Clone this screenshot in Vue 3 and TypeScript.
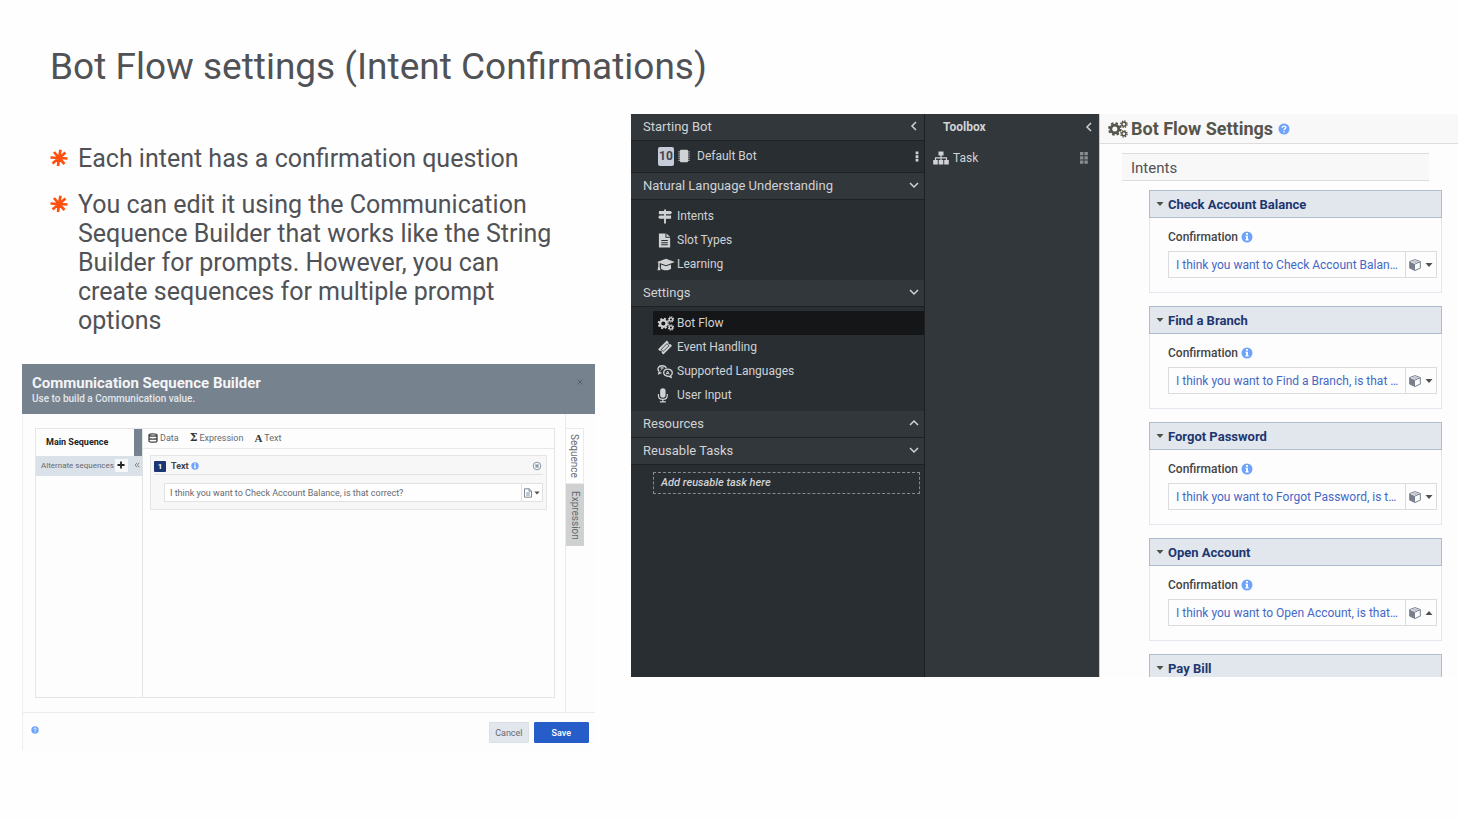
<script setup lang="ts">
import { ref } from 'vue'

interface MenuItem { icon: string; label: string; active?: boolean }
interface Intent { id: string; name: string; text: string; caret: string; open: boolean }

const nluItems: MenuItem[] = [
  { icon: 'signs', label: 'Intents' },
  { icon: 'file', label: 'Slot Types' },
  { icon: 'cap', label: 'Learning' },
]
const settingItems: MenuItem[] = [
  { icon: 'cogs', label: 'Bot Flow', active: true },
  { icon: 'ticket', label: 'Event Handling' },
  { icon: 'langs', label: 'Supported Languages' },
  { icon: 'mic', label: 'User Input' },
]
const makeIntent = (id: string, name: string, caret = 'down', open = true): Intent => ({
  id, name, caret, open, text: `I think you want to ${name}, is that correct?`,
})
const intents = ref<Intent[]>([
  makeIntent('balance', 'Check Account Balance'),
  makeIntent('branch', 'Find a Branch'),
  makeIntent('password', 'Forgot Password'),
  makeIntent('account', 'Open Account', 'up'),
  makeIntent('bill', 'Pay Bill', 'down', false),
])
const message = ref('I think you want to Check Account Balance, is that correct?')
</script>

<template>
  <svg class="sprite" aria-hidden="true">
    <symbol id="star" viewBox="0 0 18 18">
      <path d="M9 9 10.500 0.800M9 9 15.500 3.500M9 9 17.500 9.500M9 9 14.500 15M9 9 8 17M9 9 2.500 14.500M9 9 0.500 8.500M9 9 4 3" fill="none" stroke="currentColor" stroke-width="2.700" />
    </symbol>
    <symbol id="left" viewBox="0 0 10 10"><path d="M7 1 3 5 7 9" fill="none" stroke="currentColor" stroke-width="1.500" /></symbol>
    <symbol id="down" viewBox="0 0 10 10"><path d="M1 3 5 7 9 3" fill="none" stroke="currentColor" stroke-width="1.500" /></symbol>
    <symbol id="up" viewBox="0 0 10 10"><path d="M1 7 5 3 9 7" fill="none" stroke="currentColor" stroke-width="1.500" /></symbol>
    <symbol id="caret-down" viewBox="0 0 8 8"><path d="M0.500 2h7L4 6z" fill="currentColor" /></symbol>
    <symbol id="caret-up" viewBox="0 0 8 8"><path d="M0.500 6h7L4 2z" fill="currentColor" /></symbol>
    <symbol id="close" viewBox="0 0 8 8"><path d="M1.500 1.500 6.500 6.500M6.500 1.500 1.500 6.500" stroke="currentColor" fill="none" /></symbol>
    <symbol id="collapse" viewBox="0 0 8 8"><path d="M4 1 1.500 4 4 7M7 1 4.500 4 7 7" stroke="currentColor" fill="none" /></symbol>
    <symbol id="plus" viewBox="0 0 8 8"><path d="M4 0.500v7M0.500 4h7" stroke="currentColor" stroke-width="1.800" fill="none" /></symbol>
    <symbol id="chip" viewBox="0 0 14 16">
      <rect x="2.400" y="0.800" width="9.200" height="14.400" rx="1.200" fill="currentColor" />
      <path d="M0.500 3.300h13M0.500 5.700h13M0.500 8.100h13M0.500 10.500h13M0.500 12.900h13" stroke="currentColor" stroke-width="1" />
    </symbol>
    <symbol id="dots" viewBox="0 0 4 12"><path d="M.5 0.500h3v3h-3zM.5 4.500h3v3h-3zM.5 8.500h3v3h-3z" fill="currentColor" /></symbol>
    <symbol id="grip" viewBox="0 0 8 12"><path d="M0 0h3.400v3.200H0zM4.400 0h3.400v3.200H4.400zM0 4.300h3.400v3.200H0zM4.400 4.300h3.400v3.200H4.400zM0 8.600h3.400v3.200H0zM4.400 8.600h3.400v3.200H4.400z" fill="currentColor" /></symbol>
    <symbol id="signs" viewBox="0 0 16 16">
      <path d="M7 0.500h2V2h5l1.500 1.700L14 5.500H9V7h5.500v3.500H9v5H7v-5H2.200L0.700 8.800 2.200 7H7V5.500H1.500V2H7z" fill="currentColor" />
    </symbol>
    <symbol id="file" viewBox="0 0 16 16">
      <path fill-rule="evenodd" d="M1.500 0.500h7v4.500h5v10.500h-12zM4 7.500v1h7v-1zM4 9.800v1h7v-1zM4 12v1h7v-1z" fill="currentColor" />
      <path d="M9.500 0.500l4 3.600h-4z" fill="currentColor" />
    </symbol>
    <symbol id="cap" viewBox="0 0 20 16">
      <path d="M10 1.500 19.800 5.200 10 8.800 3 6.400v4l.8 4H.5l.9-4V5.700L0.200 5.200z" fill="currentColor" />
      <path d="M4.600 8 10 9.900l5.400-1.900.3 4.500c-1.400 2.600-10 2.600-11.400 0z" fill="currentColor" />
    </symbol>
    <symbol id="cogs" viewBox="0 0 20 18">
      <g fill="none" stroke="currentColor">
        <circle cx="6.800" cy="9" r="3.900" stroke-width="2.800" />
        <circle cx="6.800" cy="9" r="5.800" stroke-width="2" stroke-dasharray="2.500 2.055" />
        <circle cx="15.900" cy="4.200" r="2" stroke-width="1.500" />
        <circle cx="15.900" cy="4.200" r="3.200" stroke-width="1.300" stroke-dasharray="1.400 1.113" />
        <circle cx="15.900" cy="13.800" r="2" stroke-width="1.500" />
        <circle cx="15.900" cy="13.800" r="3.200" stroke-width="1.300" stroke-dasharray="1.400 1.113" />
      </g>
    </symbol>
    <symbol id="ticket" viewBox="0 0 16 16">
      <path fill-rule="evenodd" d="M10 .6 11.800 2.400c-.7 1.300.5 2.500 1.800 1.800L15.500 6.100 6.200 15.400 4.400 13.600c.7-1.300-.5-2.500-1.800-1.800L.6 9.900zM10.100 3.400 3.500 10l2.600 2.600L12.700 6z" fill="currentColor" />
      <path d="M10.100 4.300 4.400 10l1.700 1.700L11.800 6z" fill="currentColor" />
    </symbol>
    <symbol id="langs" viewBox="0 0 18 16">
      <g fill="none" stroke="currentColor" stroke-width="1.500">
        <path d="M2.600 8.300C-.3 5.500 1.500 1.500 5.500 1.500c2.800 0 4.600 1.400 5 3M2.600 8.300 2 10.300l3-1.100" />
        <path d="M12 5.300c5.800 0 6.300 5.700 3.300 7.200l.6 2-3-1.200c-7 .4-7-8-.9-8z" />
        <path d="M3.800 4h3.800M5.700 3v1c0 1.500-.8 2.500-1.700 3M10.300 11.300l1.700-3.800 1.700 3.800M11 10.200h2" stroke-width="1.100" />
      </g>
    </symbol>
    <symbol id="mic" viewBox="0 0 16 16">
      <rect x="2.800" y="0.300" width="5.800" height="10" rx="2.900" fill="currentColor" />
      <path d="M1 6.500v1.500c0 5.600 9.400 5.600 9.400 0V6.500M5.700 12v2.700M2.500 14.900h6.400" fill="none" stroke="currentColor" stroke-width="1.300" />
    </symbol>
    <symbol id="tree" viewBox="0 0 16 14">
      <path d="M5.500 0.500h5v4h-5zM0.200 9h4.600v4.500H.2zM5.700 9h4.600v4.500H5.700zM11.200 9h4.600v4.500h-4.600z" fill="currentColor" />
      <path d="M8 4v5M2.500 9V6.800h11V9" fill="none" stroke="currentColor" stroke-width="1.200" />
    </symbol>
    <symbol id="help" viewBox="0 0 12 12">
      <circle cx="6" cy="6" r="5.500" fill="currentColor" />
      <path d="M4.200 4.800C4.300 2.500 7.900 2.700 7.800 4.600 7.700 5.800 6 5.700 6 7.200M6 8.200v1.400" fill="none" stroke="#fff" stroke-width="1.400" />
    </symbol>
    <symbol id="info" viewBox="0 0 12 12">
      <circle cx="6" cy="6" r="5.500" fill="currentColor" />
      <path d="M5 2h2v1.700H5zM4.500 4.700H7v3.600h.7v1.200H4.400V8.300H5V5.900h-.5z" fill="#fff" />
    </symbol>
    <symbol id="cube" viewBox="0 0 12 12">
      <path d="M6 .6 11.300 2.600v6.500L6 11.500.7 9.100V2.600z" fill="#fdfdfd" stroke="currentColor" stroke-width="1" />
      <path d="M.7 2.800 6 5v6.500L.7 9.100z" fill="currentColor" />
      <path d="M6 1.200 10 2.700 6 4.300 2 2.700z" fill="#c3c8ce" />
      <path d="M6 5l5.300-2.200" fill="none" stroke="currentColor" />
    </symbol>
    <symbol id="data" viewBox="0 0 10 10">
      <path d="M1 2c0-1.600 8-1.600 8 0v6c0 1.600-8 1.600-8 0zM1 2c0 1.500 8 1.500 8 0M1 5c0 1.500 8 1.500 8 0" fill="none" stroke="currentColor" stroke-width="1.300" />
    </symbol>
    <symbol id="sheet" viewBox="0 0 10 10">
      <path d="M1.500 .8h4.700L8.500 3v6.200h-7zM6 .8V3.200h2.500M3.200 5h3.600M3.200 7h3.600" fill="none" stroke="currentColor" />
    </symbol>
    <symbol id="target" viewBox="0 0 10 10">
      <circle cx="5" cy="5" r="3.800" fill="none" stroke="currentColor" />
      <path d="M3.500 3.500 6.500 6.500M6.500 3.500 3.500 6.500" stroke="currentColor" stroke-width="1.500" />
    </symbol>
  </svg>

  <main class="slide">
    <h1>Bot Flow settings (Intent Confirmations)</h1>
    <div class="columns">
      <section class="left">
        <ul class="bullets">
          <li><svg class="star"><use href="#star" /></svg><span>Each intent has a confirmation question</span></li>
          <li><svg class="star"><use href="#star" /></svg><span>You can edit it using the Communication Sequence Builder that works like the String Builder for prompts. However, you can create sequences for multiple prompt options</span></li>
        </ul>

        <section class="dialog">
          <header class="dialog-head">
            <div>
              <h2>Communication Sequence Builder</h2>
              <p>Use to build a Communication value.</p>
            </div>
            <button class="close" aria-label="Close"><svg class="i8"><use href="#close" /></svg></button>
          </header>
          <div class="dialog-body">
            <div class="frame">
              <aside class="sequences">
                <div class="main-seq">Main Sequence</div>
                <div class="alt-seq">
                  <span>Alternate sequences</span>
                  <button class="add" aria-label="Add sequence"><svg class="i8"><use href="#plus" /></svg></button>
                  <button class="fold" aria-label="Collapse"><svg class="i6"><use href="#collapse" /></svg></button>
                </div>
              </aside>
              <div class="editor">
                <nav class="tools">
                  <button><svg class="i10"><use href="#data" /></svg>Data</button>
                  <button><b class="sigma">Σ</b>Expression</button>
                  <button><b class="serif-a">A</b>Text</button>
                </nav>
                <div class="block">
                  <div class="block-head">
                    <span class="num">1</span>
                    <label for="message">Text</label>
                    <svg class="i8 blue"><use href="#info" /></svg>
                    <button class="remove" aria-label="Remove"><svg class="i10"><use href="#target" /></svg></button>
                  </div>
                  <div class="block-field">
                    <input id="message" v-model="message" type="text">
                    <button aria-label="Value type"><svg class="i10"><use href="#sheet" /></svg><svg class="i6 dark"><use href="#caret-down" /></svg></button>
                  </div>
                </div>
              </div>
            </div>
            <nav class="tabs">
              <button class="tab on">Sequence</button>
              <button class="tab">Expression</button>
            </nav>
          </div>
          <footer class="dialog-foot">
            <button class="help" aria-label="Help"><svg class="i8 blue"><use href="#help" /></svg></button>
            <button class="btn">Cancel</button>
            <button class="btn save">Save</button>
          </footer>
        </section>
      </section>

      <section class="app">
        <aside class="sidebar">
          <button class="group">Starting Bot<svg class="i10"><use href="#left" /></svg></button>
          <div class="bot">
            <span class="count">10</span>
            <svg class="chip"><use href="#chip" /></svg>
            <span>Default Bot</span>
            <button aria-label="More"><svg class="dots"><use href="#dots" /></svg></button>
          </div>
          <button class="group">Natural Language Understanding<svg class="i10"><use href="#down" /></svg></button>
          <nav class="items">
            <a v-for="item in nluItems" :key="item.label" href="#"><svg :class="item.icon"><use :href="'#' + item.icon" /></svg><span>{{ item.label }}</span></a>
          </nav>
          <button class="group">Settings<svg class="i10"><use href="#down" /></svg></button>
          <nav class="items">
            <a v-for="item in settingItems" :key="item.label" href="#" :class="{ active: item.active }"><svg :class="item.icon"><use :href="'#' + item.icon" /></svg><span>{{ item.label }}</span></a>
          </nav>
          <button class="group">Resources<svg class="i10"><use href="#up" /></svg></button>
          <button class="group">Reusable Tasks<svg class="i10"><use href="#down" /></svg></button>
          <div class="drop">Add reusable task here</div>
        </aside>

        <aside class="toolbox">
          <button class="toolbox-head">Toolbox<svg class="i10"><use href="#left" /></svg></button>
          <div class="task"><svg class="tree"><use href="#tree" /></svg><span>Task</span><svg class="grip"><use href="#grip" /></svg></div>
        </aside>

        <div class="settings">
          <header class="settings-head">
            <svg class="cogs"><use href="#cogs" /></svg>
            <h2>Bot Flow Settings</h2>
            <svg class="i12 blue"><use href="#help" /></svg>
          </header>
          <div class="settings-body">
            <h3>Intents</h3>
            <article v-for="intent in intents" :key="intent.id" class="card">
              <button class="card-head" :aria-expanded="intent.open" @click="intent.open = !intent.open">
                <svg class="i8 dark"><use href="#caret-down" /></svg>{{ intent.name }}
              </button>
              <div v-if="intent.open" class="card-body">
                <div class="card-label"><label :for="intent.id">Confirmation</label><svg class="i12 blue"><use href="#info" /></svg></div>
                <div class="field">
                  <input :id="intent.id" v-model="intent.text" type="text">
                  <button aria-label="Value type"><svg class="i12"><use href="#cube" /></svg><svg class="i8 dark"><use :href="'#caret-' + intent.caret" /></svg></button>
                </div>
              </div>
            </article>
          </div>
        </div>
      </section>
    </div>
  </main>
</template>

<style>
body { margin: 0; background: #fefefe; }
</style>

<style scoped>
* { box-sizing: border-box; }
h1, h2, h3, p, ul { margin: 0; padding: 0; font-weight: 400; }
button { font: inherit; color: inherit; background: none; border: 0; padding: 0; cursor: pointer; }
input { font: inherit; color: inherit; background: none; border: 0; min-width: 0; outline: 0; text-overflow: ellipsis; }
a { color: inherit; text-decoration: none; }
svg { flex: none; display: block; }
.sprite { position: absolute; width: 0; height: 0; }
.i6 { width: 6px; height: 6px; }
.i8 { width: 8px; height: 8px; }
.i10 { width: 10px; height: 10px; }
.i12 { width: 12px; height: 12px; }
.blue { color: #6ea3fb; }
.dark { color: #505048; }

.slide { height: 100vh; display: flex; flex-direction: column; padding: 45px 0 69px 22px; font-family: Roboto, "Liberation Sans", sans-serif; color: #505256; }
h1 { font-size: 37px; line-height: 44px; padding-left: 28px; margin-bottom: 25px; }
.columns { flex: 1; min-height: 0; display: grid; grid-template-columns: minmax(0, 573fr) minmax(0, 827fr); gap: 36px; }
.left { display: flex; flex-direction: column; }
.bullets { list-style: none; padding: 30px 40px 29px 28px; font-size: 25px; line-height: 29px; display: flex; flex-direction: column; gap: 17px; }
.bullets li { display: flex; gap: 10px; }
.star { width: 18px; height: 18px; margin-top: 5px; color: #ff4f0f; }

.dialog { flex: 1; display: flex; flex-direction: column; background: #fdfdfd; font-size: 9px; color: #666a70; box-shadow: inset 1px 0 #eee; }
.dialog-head { display: flex; justify-content: space-between; align-items: flex-start; height: 50px; padding: 10px 11px 0 10px; background: #77828f; color: #f4f5f6; }
.dialog-head h2 { font-size: 15px; line-height: 18px; font-weight: 700; }
.dialog-head p { font-size: 10px; line-height: 14px; font-weight: 500; color: #e4e7ea; }
.close { margin-top: 4px; color: #56606c; }
.dialog-body { flex: 1; display: flex; }
.frame { flex: 1; display: flex; margin: 14px 10px 14px 13px; border: 1px solid #e3e5e6; }
.sequences { width: 107px; border-right: 1px solid #e0e2e4; }
.main-seq { height: 27px; line-height: 27px; padding-left: 10px; font-weight: 700; color: #222; border-right: 8px solid #77828f; }
.alt-seq { display: flex; align-items: center; height: 20px; padding: 0 2px 2px 5px; background: #dae1e9; font-size: 8px; white-space: nowrap; }
.add { display: grid; place-items: center; width: 13px; height: 13px; margin: 0 auto 0 1px; background: #f6f7f8; color: #222; }
.fold { color: #666; }
.editor { flex: 1; }
.tools { display: flex; align-items: center; gap: 11px; height: 20px; padding: 0 0 1px 5px; border-bottom: 1px solid #e6e8e9; }
.tools button { display: flex; align-items: center; gap: 2px; }
.tools svg { color: #444; }
.sigma, .serif-a { font-family: "DejaVu Serif", serif; font-size: 11px; line-height: 12px; color: #333; }
.serif-a { font-family: "Liberation Serif", serif; }
.block { margin: 6px 7px; padding: 0 3px 7px; background: #f7f7f7; border: 1px solid #e4e5e6; }
.block-head { display: flex; align-items: center; height: 19px; margin-bottom: 8px; padding-top: 2px; border-bottom: 1px solid #e0e1e2; }
.num { width: 12px; height: 11px; line-height: 11px; text-align: center; border-radius: 1px; background: #1c3573; color: #fff; font-size: 8px; font-weight: 700; }
.block-head label { font-weight: 700; margin: 0 2px 0 5px; color: #444; }
.remove { margin-left: auto; margin-right: 1px; color: #8997a6; }
.block-field { display: flex; margin-left: 10px; height: 19px; background: #fefefe; border: 1px solid #dfe1e3; }
.block-field input { flex: 1; padding: 0 5px; }
.block-field button { display: flex; align-items: center; gap: 1px; padding: 0 2px 0 1px; color: #7c8896; border-left: 1px solid #dfe1e3; }
.tabs { display: flex; flex-direction: column; width: 30px; padding-top: 14px; border-left: 1px solid #ebebeb; }
.tab { width: 18px; height: 62px; writing-mode: vertical-rl; text-align: center; font-size: 10px; background: #cfd1d1; }
.tab.on { height: 56px; background: #fefefe; border: 1px solid #ebebeb; border-left: 0; }
.dialog-foot { display: flex; align-items: center; gap: 5px; height: 38px; padding: 2px 6px 0 9px; border-top: 1px solid #ececec; }
.help { margin-right: auto; margin-bottom: 6px; }
.btn { height: 21px; padding: 0 5px; background: #e2e6ed; border: 1px solid #dadfe6; border-radius: 1px; }
.btn.save { padding: 0 17px; background: #275dc8; border-color: #275dc8; color: #fff; font-weight: 500; }

.app { display: grid; grid-template-columns: 294px 174px minmax(0, 1fr); margin-bottom: 73px; overflow: hidden; }
.sidebar, .toolbox { font-size: 12px; color: #d0d2d3; }
.sidebar { background: #292e33; border-right: 1px solid #1c2023; }
.group { display: flex; align-items: center; justify-content: space-between; width: 100%; height: 27px; padding: 0 5px 2px 12px; background: #32373c; border-bottom: 1px solid #1d2124; font-size: 13px; }
.bot { display: flex; align-items: center; height: 32px; padding: 0 5px 1px 27px; border-bottom: 1px solid #1d2124; }
.bot button { margin-left: auto; }
.count { width: 16px; height: 19px; line-height: 19px; text-align: center; border-radius: 2px; background: #c5cbd8; color: #3d444c; font-weight: 700; }
.chip { width: 14px; height: 14px; margin: 0 6px 0 3px; }
.dots { width: 4px; height: 11px; }
.items { padding: 4px 0 4px 22px; border-bottom: 1px solid #1d2124; margin-bottom: -1px; }
.items a { display: flex; align-items: center; height: 24px; padding-left: 3px; }
.items a.active { background: #141617; }
.items svg { width: 16px; height: 15px; margin: 0 4px 0 1px; }
.items svg.cogs, .items svg.cap { width: 18px; margin-right: 2px; }
.drop { margin: 7px 4px 0 22px; height: 22px; line-height: 20px; padding-left: 7px; border: 1px dashed #858a8e; font-size: 11px; font-weight: 500; font-style: italic; }
.toolbox { background: #32373c; }
.toolbox-head { display: flex; align-items: center; justify-content: space-between; width: 100%; height: 27px; padding: 0 5px 2px 18px; font-weight: 700; }
.task { display: flex; align-items: center; height: 33px; padding: 0 11px 0 8px; }
.tree { width: 16px; height: 14px; margin-right: 4px; }
.grip { width: 8px; height: 12px; margin-left: auto; color: #8a8d90; }
.settings { display: flex; flex-direction: column; min-height: 0; background: #fdfdfd; border-left: 1px solid #ccc; }
.settings-head { display: flex; align-items: center; gap: 3px; height: 30px; padding-left: 8px; background: #f8f8f8; border-bottom: 1px solid #dcdcdc; }
.settings-head h2 { font-size: 18px; line-height: 24px; font-weight: 700; color: #55554c; }
.settings-head .cogs { width: 20px; height: 18px; color: #55554c; }
.settings-head .i12 { margin-left: 2px; }
.settings-body { flex: 1; min-height: 0; overflow: hidden; padding: 9px 16px 0 22px; }
h3 { height: 28px; line-height: 28px; margin: 0 13px 9px 0; padding-left: 9px; font-size: 15px; background: #f8f8f8; border-top: 1px solid #ddd; border-bottom: 1px solid #ddd; }
.card { margin: 0 0 13px 27px; }
.card-head { display: flex; align-items: center; gap: 4px; width: 100%; height: 28px; padding-left: 6px; background: #e2e6ed; border: 1px solid #afbccb; font-size: 13px; font-weight: 700; color: #1d3770; }
.card-body { height: 75px; padding: 11px 4px 0 18px; font-size: 12px; border: 1px solid #e2e8ee; border-top: 0; }
.card-label { display: flex; align-items: center; gap: 3px; line-height: 16px; margin-bottom: 6px; font-weight: 500; color: #444; }
.field { display: flex; height: 27px; border: 1px solid #dadcde; color: #4468c8; }
.field input { flex: 1; padding: 0 5px 0 7px; }
.field button { display: flex; align-items: center; gap: 4px; padding: 0 3px; border-left: 1px solid #dadcde; color: #77808c; }
</style>
